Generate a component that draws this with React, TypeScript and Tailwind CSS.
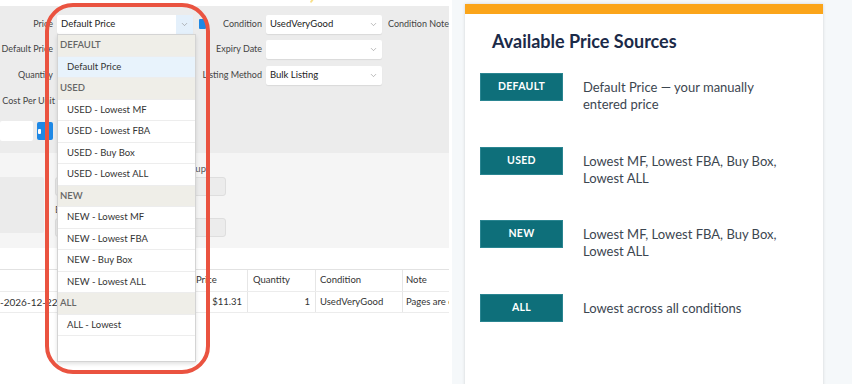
import { ChevronDown } from 'lucide-react';

type DropItem = { label: string; group?: boolean; active?: boolean };

const dropItems: DropItem[] = [
  { label: 'DEFAULT', group: true },
  { label: 'Default Price', active: true },
  { label: 'USED', group: true },
  { label: 'USED - Lowest MF' },
  { label: 'USED - Lowest FBA' },
  { label: 'USED - Buy Box' },
  { label: 'USED - Lowest ALL' },
  { label: 'NEW', group: true },
  { label: 'NEW - Lowest MF' },
  { label: 'NEW - Lowest FBA' },
  { label: 'NEW - Buy Box' },
  { label: 'NEW - Lowest ALL' },
  { label: 'ALL', group: true },
  { label: 'ALL - Lowest' },
];

const sources = [
  { tag: 'DEFAULT', text: ['Default Price — your manually', 'entered price'] },
  { tag: 'USED', text: ['Lowest MF, Lowest FBA, Buy Box,', 'Lowest ALL'] },
  { tag: 'NEW', text: ['Lowest MF, Lowest FBA, Buy Box,', 'Lowest ALL'] },
  { tag: 'ALL', text: ['Lowest across all conditions'] },
];

function Select({ value, width, highlight }: { value?: string; width: string; highlight?: boolean }) {
  return (
    <div className={`${width} h-[19px] bg-white rounded-[2px] shadow-[0_1px_1px_rgba(0,0,0,0.08)] flex items-center pl-[4px]`}>
      <span className="flex-1 truncate text-[#222]">{value}</span>
      <span className={`w-[17px] h-full flex items-center justify-center ${highlight ? 'bg-[#e4f0fb]' : ''}`}>
        <ChevronDown size={9} strokeWidth={1.5} className="text-[#888]" />
      </span>
    </div>
  );
}

function Label({ text, width }: { text: string; width: string }) {
  return (
    <div className={`${width} flex justify-end whitespace-nowrap text-[#444] text-[9px]`}>
      <span>{text}</span>
    </div>
  );
}

export default function App() {
  return (
    <div className="w-[852px] h-[384px] flex overflow-hidden bg-[#f5f8fa]">
      {/* app screenshot */}
      <div className="relative w-[452px] h-full bg-white overflow-hidden font-['Lato',sans-serif] text-[9.5px] text-[#333]">
        <div className="h-[6px] relative">
          <div className="absolute left-[311px] top-[-2px] w-[2px] h-[5px] bg-[#f8e08a] rotate-[35deg] rounded-full" />
        </div>

        {/* form */}
        <div className="w-[449px] h-[147px] bg-[#ececec] pt-[8px]">
          <div className="flex items-center h-[20px]">
            <Label text="Price" width="w-[53px]" />
            <div className="ml-[4px]">
              <Select value="Default Price" width="w-[136px]" highlight />
            </div>
            <div className="ml-[6px] w-[7px] h-[10px] bg-[#1e88e5] rounded-[1px]" />
            <Label text="Condition" width="w-[56px]" />
            <div className="ml-[4px]">
              <Select value="UsedVeryGood" width="w-[116px]" />
            </div>
            <span className="ml-[6px] whitespace-nowrap text-[#444] text-[9px]">Condition Note</span>
          </div>
          <div className="flex items-center h-[20px] mt-[5px]">
            <Label text="Default Price" width="w-[53px]" />
            <div className="ml-[4px] w-[136px] h-[19px] bg-white rounded-[2px]" />
            <div className="w-[13px]" />
            <Label text="Expiry Date" width="w-[56px]" />
            <div className="ml-[4px]">
              <Select width="w-[116px]" />
            </div>
          </div>
          <div className="flex items-center h-[20px] mt-[6px]">
            <Label text="Quantity" width="w-[53px]" />
            <div className="ml-[4px] w-[136px] h-[19px] bg-white rounded-[2px]" />
            <div className="w-[13px]" />
            <Label text="Listing Method" width="w-[56px]" />
            <div className="ml-[4px]">
              <Select value="Bulk Listing" width="w-[116px]" />
            </div>
          </div>
          <div className="flex items-center h-[20px] mt-[6px]">
            <Label text="Cost Per Unit" width="w-[55px]" />
            <div className="ml-[2px] w-[136px] h-[19px] bg-white rounded-[2px]" />
          </div>
          <div className="flex items-center h-[20px] mt-[10px]">
            <div className="w-[33px] h-[20px] bg-white rounded-[2px]" />
            <div className="ml-[4px] w-[16px] h-[18px] bg-[#1e88e5] rounded-[2px] flex items-center">
              <div className="ml-[1px] w-[3px] h-[5px] bg-white rounded-[1px]" />
            </div>
          </div>
        </div>

        {/* secondary panel */}
        <div className="w-[449px] h-[95px] bg-[#f5f5f5] flex">
          <div className="mt-[24px] w-[44px] h-[56px] bg-[#ebebeb] rounded-r-[2px]" />
          <div className="ml-[11px] mt-[10px] flex flex-col">
            <div className="w-[151px] text-right text-[#555] leading-[12px]">Merchant Shipping Group</div>
            <div className="mt-[2px] w-[171px] h-[19px] bg-[#ececec] border border-[#dedede] rounded-[3px]" />
            <div className="mt-[8px] text-[#555] leading-[12px]">Batch Notes</div>
            <div className="mt-[2px] w-[171px] h-[19px] bg-[#ececec] border border-[#dedede] rounded-[3px]" />
          </div>
        </div>

        <div className="h-[21px]" />

        {/* table */}
        <div className="w-[449px] border-t border-[#e2e2e2] text-[#333]">
          <div className="flex h-[22px] items-center border-b border-[#ececec]">
            <div className="w-[120px] pl-[2px]" />
            <div className="w-[73px] h-full border-r border-[#e6e6e6]" />
            <div className="w-[55px] h-full flex items-center pl-[3px] border-r border-[#e6e6e6]">Price</div>
            <div className="w-[68px] h-full flex items-center pl-[5px] border-r border-[#e6e6e6]">Quantity</div>
            <div className="w-[87px] h-full flex items-center pl-[4px] border-r border-[#e6e6e6]">Condition</div>
            <div className="flex-1 h-full flex items-center pl-[3px]">Note</div>
          </div>
          <div className="flex h-[21px] items-center border-b border-[#ececec]">
            <div className="w-[120px] whitespace-nowrap text-[10px]">-2026-12-22 20:14</div>
            <div className="w-[73px] h-full border-r border-[#e6e6e6]" />
            <div className="w-[55px] h-full flex items-center justify-end pr-[5px] border-r border-[#e6e6e6]">$11.31</div>
            <div className="w-[68px] h-full flex items-center justify-end pr-[5px] border-r border-[#e6e6e6]">1</div>
            <div className="w-[87px] h-full flex items-center pl-[4px] border-r border-[#e6e6e6]">UsedVeryGood</div>
            <div className="flex-1 h-full flex items-center pl-[3px] whitespace-nowrap overflow-hidden">Pages are clean</div>
          </div>
        </div>

        {/* open dropdown */}
        <div className="absolute left-[57px] top-[34px] w-[139px] h-[328px] bg-white border border-[#d4d4d4] shadow-[0_2px_4px_rgba(0,0,0,0.12)]">
          {dropItems.map((item) => (
            <div
              key={item.label}
              className={`h-[21.5px] flex items-center border-b border-[#ededed] ${
                item.group
                  ? 'bg-[#efeee8] pl-[2px] text-[#666] font-semibold'
                  : item.active
                  ? 'bg-[#e8f3fc] pl-[9px] text-[#333]'
                  : 'pl-[9px] text-[#333]'
              }`}
            >
              {item.label}
            </div>
          ))}
        </div>

        {/* highlight ring */}
        <div className="absolute left-[45px] top-[3px] w-[165px] h-[371px] border-[4px] border-[#ea5340] rounded-[28px]" />
      </div>

      {/* info card */}
      <div className="ml-[13px] mt-[4px] w-[358px] h-[400px] bg-white shadow-[0_0_3px_rgba(0,0,0,0.15)] font-['Lato',sans-serif]">
        <div className="h-[10px] bg-[#fba51a]" />
        <div className="pl-[27px] pt-[16px] text-[18px] leading-[22px] font-bold text-[#1b2a48]">Available Price Sources</div>
        <div className="mt-[21px]">
          {sources.map((s) => (
            <div key={s.tag} className="h-[73.6px] flex items-start">
              <div className="ml-[15px] w-[83px] h-[28px] bg-[#0e6f7a] border border-[#2a8591] flex items-center justify-center text-white text-[10.5px] font-bold tracking-[0.3px]">
                {s.tag}
              </div>
              <div className="ml-[20px] mt-[6px] text-[13px] leading-[17px] text-[#3c4650]">
                {s.text.map((t) => (
                  <div key={t}>{t}</div>
                ))}
              </div>
            </div>
          ))}
        </div>
      </div>
    </div>
  );
}
